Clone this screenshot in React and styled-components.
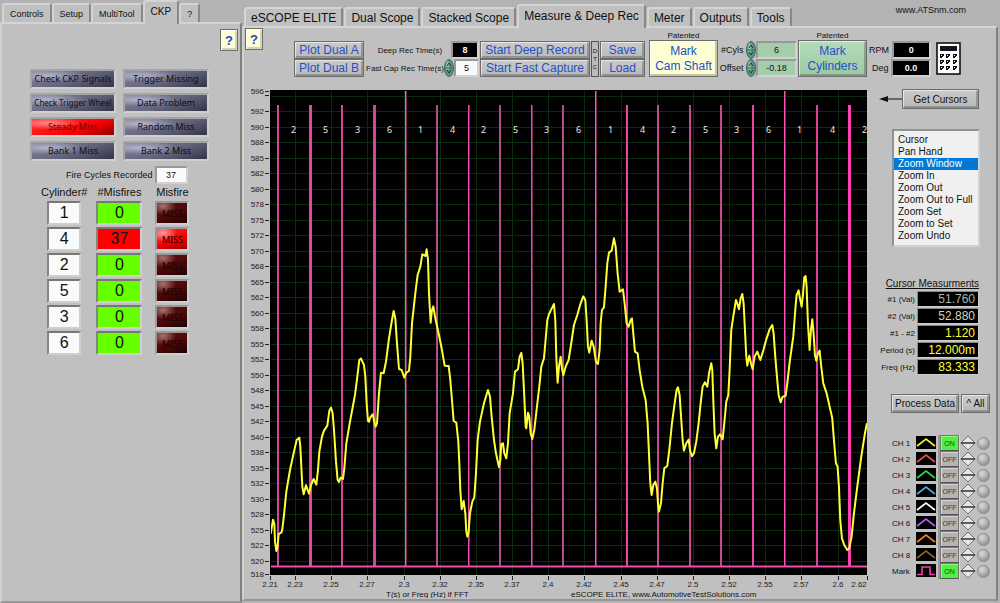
import React from 'react';
import styled, { createGlobalStyle } from 'styled-components';

const GlobalStyle = createGlobalStyle`
  * {
    box-sizing: border-box;
  }

  body {
    margin: 0;
    background: #b3b3b3;
    color: #111;
    font-family: "Liberation Sans", Arial, sans-serif;
    font-size: 10px;
  }

  button, input, select {
    margin: 0;
    padding: 0;
    border-radius: 0;
    color: inherit;
    font: inherit;
  }
`;

const Screen = styled.div`
  display: flex;
  align-items: stretch;
  min-height: 100vh;
`;

const Side = styled.section`
  display: flex;
  flex-direction: column;
  flex: 0 0 242px;
`;

const Main = styled.section`
  display: flex;
  flex-direction: column;
  flex: 1;
  min-width: 0;
  padding: 0 2px 2px 0;
`;

const Tab = styled.button`
  position: relative;
  z-index: ${props => (props.$active ? 1 : 0)};
  height: ${props => (props.$active ? 24 : 19)}px;
  margin-bottom: ${props => (props.$active ? -2 : 0)}px;
  padding: 0 6px ${props => (props.$active ? 3 : 0)}px;
  border: 2px solid;
  border-color: #d4d4d4 #888 #c0c0c0 #d4d4d4;
  border-bottom-width: 0;
  border-radius: 3px 3px 0 0;
  background: #c0c0c0;
  font-size: ${props => (props.$active ? 'max(10px, 1em)' : '1em')};
  white-space: nowrap;
`;

const TabBar = styled.nav`
  display: flex;
  align-items: flex-end;
  gap: ${props => (props.$large ? 1 : 0)}px;
  height: ${props => (props.$large ? 26 : 22)}px;
  padding-left: 2px;
  font-size: ${props => (props.$large ? 12 : 9)}px;

  ${Tab} {
    padding-left: ${props => (props.$large ? 5 : 6)}px;
    padding-right: ${props => (props.$large ? 5 : 6)}px;
  }
`;

const SiteName = styled.span`
  align-self: flex-start;
  margin: 5px 32px 0 auto;
  font-size: 9px;
`;

const Panel = styled.div`
  flex: 1;
  border: 2px solid;
  border-color: #d4d4d4 #808080 #969696 #d0d0d0;
  background: #c0c0c0;
`;

const HelpButton = styled.button`
  display: block;
  align-self: flex-start;
  width: 18px;
  height: 22px;
  border: 1px solid #6f6f66;
  background: #fdfdd6;
  box-shadow: inset 1px 1px #fffff2, inset -2px -2px #d5d5b4;
  color: #1c49c8;
  font-size: 13px;
  font-weight: bold;
`;

const SideBody = styled(Panel)`
  padding: 5px 2px 0 28px;

  ${HelpButton} {
    margin-left: auto;
  }
`;

const StatusGrid = styled.div`
  display: grid;
  grid-template-columns: 86px 86px;
  gap: 4px 7px;
  margin-top: 18px;
`;

const StatusLamp = styled.button`
  height: 20px;
  border: 2px solid;
  border-color: #a4a4a4 #d0d0d0 #d0d0d0 #a4a4a4;
  background: ${props => props.$lit
    ? 'radial-gradient(ellipse at 18% 25%, #ff8a8a, transparent 38%), linear-gradient(160deg, #ff2020 20%, #f40000 65%, #8e0000)'
    : 'radial-gradient(ellipse at 18% 30%, #b4b4ca, transparent 42%), linear-gradient(160deg, #82829b, #62627a 55%, #353548)'};
  color: ${props => (props.$lit ? '#6a0505' : '#0e0e18')};
  font-family: "Noto Sans", sans-serif;
  font-size: ${props => (props.$long ? 8 : 9)}px;
  line-height: 14px;
  white-space: nowrap;
`;

const CycleRow = styled.label`
  display: flex;
  align-items: center;
  gap: 2px;
  margin: 5px 0 0 36px;
  font-size: 9px;
`;

const Field = styled.input`
  width: ${props => props.$width}px;
  min-width: 0;
  height: ${props => props.$height || 18}px;
  border: 2px solid;
  border-color: #999 #d2d2d2 #d2d2d2 #999;
  background: ${props => props.$bg || '#fafafa'};
  color: ${props => props.$color || '#111'};
  font-size: ${props => props.$size || 9}px;
  font-weight: ${props => (props.$bold ? 'bold' : 'normal')};
  text-align: center;
`;

const MisfireTable = styled.table`
  margin-left: 6px;
  border-collapse: separate;
  border-spacing: 5px 2px;

  th {
    height: 13px;
    padding: 0;
    font-size: 11px;
    font-weight: normal;
    line-height: 13px;
    white-space: nowrap;
  }

  td {
    padding: 0 4px;
  }
`;

const CountCell = styled.div`
  width: ${props => props.$width}px;
  height: 24px;
  margin: 0 auto;
  border: 2px solid;
  border-color: #777 #cfcfcf #cfcfcf #858585;
  background: ${props => props.$bg};
  font-size: 16px;
  line-height: 20px;
  text-align: center;
`;

const MissLamp = styled(CountCell)`
  background: ${props => props.$lit
    ? 'radial-gradient(ellipse at 20% 20%, #ff9c9c, transparent 40%), linear-gradient(160deg, #ff2a2a, #f00000 60%, #a00000)'
    : 'radial-gradient(ellipse at 20% 15%, #a87070, transparent 38%), linear-gradient(160deg, #621010, #4a0808 55%, #220202)'};
  border-color: #999 #cfcfcf #cfcfcf #999;
  color: #180202;
  font-family: "Noto Sans", sans-serif;
  font-size: 9px;
  line-height: 21px;
`;

const Toolbar = styled.div`
  display: flex;
  align-items: flex-end;
  height: 49px;
  padding-left: 1px;
`;

const Stack = styled.div`
  display: flex;
  flex-direction: column;
  align-items: ${props => props.$align || 'stretch'};
  width: ${props => (props.$width ? `${props.$width}px` : 'auto')};
  margin-left: ${props => props.$left || 0}px;
`;

const ToolButton = styled.button`
  height: ${props => props.$height || 18}px;
  border: 1px solid #6c6c6c;
  background: ${props => props.$bg || 'linear-gradient(#cacaca, #b9b9b9)'};
  box-shadow: inset 1px 1px rgba(255, 255, 255, 0.55), inset -2px -2px rgba(0, 0, 0, 0.22);
  color: ${props => (props.$dark ? '#111' : '#2350c8')};
  font-size: ${props => (props.$dark ? 10 : 12)}px;
  line-height: 15px;
  white-space: nowrap;
`;

const DtcButton = styled.button`
  width: 8px;
  height: 36px;
  margin-left: 1px;
  border: 1px solid #555;
  background: #bcbcbc;
  font-size: 6px;
  line-height: 8px;
`;

const Patented = styled.span`
  height: 8px;
  font-size: 8px;
  line-height: 8px;
  text-align: center;
`;

const FieldRow = styled.div`
  display: flex;
  align-items: center;
  justify-content: flex-end;
  height: 18px;
  font-size: ${props => (props.$small ? 8 : 9)}px;
  white-space: nowrap;
`;

const PlainButton = styled.button`
  display: block;
  border: 0;
  background: none;
  line-height: 0;
`;

const CalcButton = styled(PlainButton)`
  margin: 0 0 2px 5px;
`;

const Body = styled.div`
  display: flex;
`;

const Plot = styled.svg`
  display: block;
  flex: 1;
  min-width: 0;
  height: auto;
`;

const Sidebar = styled.aside`
  display: flex;
  flex: 0 0 128px;
  flex-direction: column;
  padding: 12px 0 0 9px;
`;

const CursorRow = styled.div`
  display: flex;
  align-items: center;

  ${ToolButton} {
    width: 77px;
  }
`;

const ToolList = styled.select`
  width: 88px;
  height: 118px;
  margin: 20px 0 0 15px;
  padding: 3px 0;
  overflow: hidden;
  border: 2px solid;
  border-color: #929292 #d2d2d2 #d2d2d2 #929292;
  outline: 0;
  background: #f0f0f0;
  color: #111;
  font-size: 10px;
  scrollbar-width: none;

  option {
    min-height: 12px;
    padding: 0 4px;
    line-height: 12px;
  }

  option:checked {
    background: #0078d7 linear-gradient(#0078d7, #0078d7);
    color: #fff;
  }
`;

const Measurements = styled.div`
  display: grid;
  grid-template-columns: 38px 62px;
  gap: 1px 2px;
  align-items: center;
  justify-content: start;
  margin-top: 31px;
  font-size: 8px;
  text-align: right;
`;

const MeasureTitle = styled.div`
  grid-column: 1 / -1;
  height: 12px;
  font-size: 10px;
  line-height: 12px;
  text-decoration: underline;
  white-space: nowrap;
`;

const Readout = styled.output`
  height: 16px;
  padding-right: 3px;
  border: 1px solid;
  border-color: #888 #cfcfcf #cfcfcf #888;
  background: #000;
  color: ${props => props.$color};
  font-size: 12px;
  line-height: 15px;
`;

const ProcessRow = styled.div`
  display: flex;
  gap: 2px;
  margin: 19px 0 0 14px;
`;

const Channels = styled.div`
  display: grid;
  gap: 0;
  margin: 22px 0 0 15px;
`;

const Channel = styled.div`
  display: grid;
  grid-template-columns: 23px 21px 20px 17px 14px;
  column-gap: 1px;
  align-items: center;
  height: 16px;
  font-size: 8px;
  white-space: nowrap;
`;

const SwitchButton = styled.button`
  width: 19px;
  height: 16px;
  margin-left: 2px;
  border: 1px solid #777;
  border-bottom-color: #555;
  background: ${props => (props.$on ? '#4df043' : '#b4b4b4')};
  box-shadow: inset 1px 1px ${props => (props.$on ? '#8cff80' : '#d5d5d5')}, -2px 0 #999, 1px 0 #d6d6d6;
  color: ${props => (props.$on ? '#174a12' : '#333')};
  font-size: 7px;
`;

const Knob = styled.button`
  width: 13px;
  height: 13px;
  border: 1px solid #8c8c8c;
  border-radius: 50%;
  background: radial-gradient(circle at 35% 30%, #dcdcdc, #a2a2a2 60%, #858585);
`;

const statusLamps = [
  'Check CKP Signals', 'Trigger Missing',
  'Check Trigger Wheel', 'Data Problem',
  'Steady Miss', 'Random Miss',
  'Bank 1 Miss', 'Bank 2 Miss',
];

const cylinders = [
  { id: 1, misfires: 0 },
  { id: 4, misfires: 37 },
  { id: 2, misfires: 0 },
  { id: 5, misfires: 0 },
  { id: 3, misfires: 0 },
  { id: 6, misfires: 0 },
];

const cursorTools = [
  'Cursor', 'Pan Hand', 'Zoom Window', 'Zoom In', 'Zoom Out',
  'Zoom Out to Full', 'Zoom Set', 'Zoom to Set', 'Zoom Undo',
];

const measurements = [
  ['#1 (Val)', '51.760', '#a5b9a8'],
  ['#2 (Val)', '52.880', '#d6d3b4'],
  ['#1 - #2', '1.120', '#ffff38'],
  ['Period (s)', '12.000m', '#ffff38'],
  ['Freq (Hz)', '83.333', '#ffff38'],
];

const channels = [
  ['CH 1', '#f5ee33', true],
  ['CH 2', '#e25050', false],
  ['CH 3', '#25e035', false],
  ['CH 4', '#49aee8', false],
  ['CH 5', '#ffffff', false],
  ['CH 6', '#b15cf0', false],
  ['CH 7', '#f08020', false],
  ['CH 8', '#8a6420', false],
  ['Mark', '#e846a8', true],
];

const yLabels = [
  592, 590, 588, 585, 582, 580, 578, 575, 572, 570, 568, 565, 562, 560, 558,
  555, 552, 550, 548, 545, 542, 540, 538, 535, 532, 530, 528, 525, 522, 520,
];

const xTicks = [
  [270, '2.21'], [295, '2.23'], [331, '2.25'], [367, '2.27'], [404, '2.3'],
  [440, '2.32'], [476, '2.35'], [512, '2.37'], [548, '2.4'], [584, '2.42'],
  [621, '2.45'], [657, '2.47'], [693, '2.5'], [729, '2.52'], [765, '2.55'],
  [801, '2.57'], [838, '2.6'], [867, '2.62'],
];

// x, line width, colour, full height
const markers = [
  [278, 2, '#d8429a'], [310, 3, '#e846a4'], [342, 2, '#d8429a'], [374, 3, '#d8429a'],
  [405, 1, '#ff55bb', true], [437, 2, '#b05088'], [468, 1, '#f04cae'], [500, 2, '#b05088'],
  [531, 1, '#f04cae'], [563, 2, '#b05088'], [595, 1, '#ff55bb', true], [627, 2, '#e846a4'],
  [658, 2, '#c84894'], [690, 2, '#c84894'], [721, 2, '#c84894'], [753, 2, '#e846a4'],
  [784, 1, '#ff55bb', true], [817, 2, '#d8429a'], [849, 3, '#ff3fb4'],
];

const firing = [2, 5, 3, 6, 1, 4];

// samples at three per pixel, origin at the left of the screen
const trace = `
92,942 99,899 103,912 105,965 109,993 112,985 116,942 124,938 127,928 132,885 139,815 150,750
162,695 170,660 178,653 181,680 184,740 187,800 191,823 198,796 207,821 213,795 221,777 229,794
234,750 238,695 246,650 252,632 262,617 268,572 273,563 278,580 282,630 288,725 293,780 297,786
302,773 309,777 313,745 319,670 330,605 345,525 352,470 358,420 363,416 372,435 376,470 380,550
384,603 387,605 391,592 398,583 404,610 407,620 411,610 417,520 423,458 431,460 438,425 447,355
456,300 461,273 466,295 471,370 477,447 485,450 493,473 499,458 507,453 511,410 516,310 526,220
533,165 541,140 547,103 556,108 560,88 564,120 567,220 572,308 576,270 580,259 586,295 597,345
605,385 614,437 626,438 631,480 636,540 641,603 649,608 655,665 658,730 661,810 665,868 671,843
676,880 679,935 682,950 686,935 690,880 697,845 703,832 708,760 713,660 720,605 732,550 744,510
750,530 755,590 762,660 768,700 777,741 781,720 784,672 789,670 793,700 799,715 804,670 809,580
819,520 825,455 834,448 839,410 844,399 848,430 853,530 857,620 859,625 864,578 868,590 872,640
877,657 883,630 891,560 898,500 904,440 912,415 916,370 922,300 928,280 937,262 942,252 946,300
949,410 953,488 957,440 962,410 966,445 970,466 977,440 986,420 993,375 1002,315 1012,285
1022,250 1030,229 1036,240 1040,300 1044,380 1048,398 1055,362 1061,380 1068,425 1074,432
1079,390 1082,310 1086,270 1092,262 1097,200 1102,130 1107,98 1115,92 1122,55 1127,80 1133,160
1139,215 1149,208 1154,250 1160,310 1166,320 1172,300 1176,295 1180,340 1185,395 1193,400
1199,450 1207,500 1217,540 1223,610 1227,700 1231,790 1235,825 1240,795 1246,785 1251,805
1254,850 1257,875 1263,850 1268,790 1273,745 1282,738 1288,690 1296,610 1304,550 1310,510
1314,502 1319,525 1324,600 1328,660 1332,692 1339,670 1346,659 1350,690 1356,709 1362,700
1369,665 1376,610 1382,550 1388,500 1395,487 1402,500 1408,455 1414,430 1417,450 1420,540
1424,640 1429,685 1434,650 1440,643 1448,658 1454,600 1459,545 1465,525 1469,450 1474,330
1480,290 1488,240 1492,250 1497,268 1502,235 1507,222 1511,250 1515,330 1519,410 1522,437
1528,407 1533,430 1538,448 1544,410 1552,395 1561,420 1569,395 1580,355 1589,328 1597,315
1601,340 1606,410 1611,470 1616,525 1622,547 1628,530 1637,528 1642,490 1650,420 1660,350
1666,270 1670,225 1676,211 1680,235 1685,260 1689,225 1693,172 1697,168 1700,200 1704,310
1709,390 1713,330 1717,298 1721,340 1725,405 1729,422 1734,400 1739,392 1744,440 1750,490
1760,520 1768,555 1777,595 1782,660 1788,730 1793,740 1797,800 1801,900 1806,955 1813,975
1822,990 1828,985 1835,950 1842,880 1852,800 1864,710 1875,640 1881,610`;

const Spinner = ({ label }) => (
  <PlainButton aria-label={label}>
    <svg width="10" height="18" viewBox="0 0 10 18">
      <ellipse cx="5" cy="9" rx="4.5" ry="8.5" fill="#5d9384" stroke="#3c6d60" />
      <ellipse cx="3.5" cy="7" rx="1.6" ry="5" fill="#8dbcac" />
      <path d="M3 7 L5 4 L7 7 M3 11 L5 14 L7 11" fill="none" stroke="#193d33" />
      <path d="M1 9 H9" stroke="#3c6d60" />
    </svg>
  </PlainButton>
);

const Calculator = () => (
  <svg width="25" height="33" viewBox="0 0 25 33">
    <rect x="1" y="1" width="23" height="31" fill="#fff" stroke="#111" strokeWidth="1.6" />
    <rect x="4" y="4" width="17" height="5" fill="#15151f" />
    {[12, 18, 24].map(y => [4, 10, 17].map(x => (
      <path key={`${x}-${y}`} d={`M${x} ${y} h4 v2 h-1 v1 h-1 v1 h-2 z`} fill="#111" />
    )))}
    {[13, 19, 25].map(y => [5, 11, 18].map(x => (
      <rect key={`${x}-${y}`} x={x} y={y} width="1" height="1" fill="#fff" />
    )))}
  </svg>
);

const ScopePlot = () => (
  <Plot viewBox="244 77 624 521" role="img" aria-label="CKP trace">
    <defs>
      <clipPath id="screen">
        <rect x="271" y="91" width="596" height="484" />
      </clipPath>
    </defs>
    <rect x="270" y="90" width="597" height="485" fill="#000" />
    <g clipPath="url(#screen)">
      <g stroke="#0b2b0f">
        {xTicks.slice(1, -1).map(([x]) => <path key={x} d={`M${x + 0.5} 90 V575`} />)}
        {[95.5, ...yLabels.map((label, i) => 111 + i * 15.5)].map(y => (
          <path key={y} d={`M270 ${Math.round(y) + 0.5} H867`} />
        ))}
      </g>
      {markers.map(([x, width, color, full]) => (
        <rect key={x} x={x - Math.floor(width / 2)} y={full ? 91 : 105} width={width} height={full ? 476 : 462} fill={color} />
      ))}
      {markers.filter(m => m[1] === 1).map(([x, width, color, full]) => (
        <rect key={x} x={x + 1} y={full ? 91 : 105} width="1" height={full ? 476 : 462} fill="#80285e" />
      ))}
      <path d="M270 566.5 H867" stroke="#f04cae" strokeWidth="2" />
      <polyline
        points={trace}
        transform="translate(240 220) scale(0.3333)"
        fill="none"
        stroke="#ffff35"
        strokeWidth="6"
        strokeLinejoin="round"
      />
      <g fill="#e8e8e8" fontFamily="Noto Sans, sans-serif" fontSize="9" textAnchor="middle">
        {markers.map(([x], i) => (
          <text key={x} x={x + 15.5} y="133">{firing[i % 6]}</text>
        ))}
      </g>
    </g>
    <g stroke="#222">
      {[91.5, 95.5, ...yLabels.map((label, i) => Math.round(111 + i * 15.5) + 0.5), 574.5].map(y => (
        <path key={y} d={`M265 ${y} H269`} />
      ))}
      {xTicks.map(([x]) => <path key={x} d={`M${x + 0.5} 576 V580`} />)}
    </g>
    <g fontSize="8" fill="#222" textAnchor="end">
      <text x="264" y="94">596</text>
      {yLabels.map((label, i) => (
        <text key={label} x="264" y={Math.round(114 + i * 15.5)}>{label}</text>
      ))}
      <text x="264" y="577">518</text>
    </g>
    <g fontSize="8" fill="#222" textAnchor="middle">
      {xTicks.map(([x, label]) => <text key={x} x={Math.min(x, 859)} y="587">{label}</text>)}
    </g>
    <g fontSize="8" fill="#111">
      <text x="386" y="597">T(s) or Freq (Hz) if FFT</text>
      <text x="571" y="597">eSCOPE ELITE, www.AutomotiveTestSolutions.com</text>
    </g>
  </Plot>
);

const SidePanel = () => (
  <Side>
    <TabBar>
      <Tab>Controls</Tab>
      <Tab>Setup</Tab>
      <Tab>MultiTool</Tab>
      <Tab $active>CKP</Tab>
      <Tab>?</Tab>
    </TabBar>
    <SideBody>
      <HelpButton>?</HelpButton>
      <StatusGrid>
        {statusLamps.map(name => (
          <StatusLamp key={name} $lit={name === 'Steady Miss'} $long={name.length > 18}>{name}</StatusLamp>
        ))}
      </StatusGrid>
      <CycleRow>
        Fire Cycles Recorded
        <Field $width={33} defaultValue="37" />
      </CycleRow>
      <MisfireTable>
        <thead>
          <tr>
            <th>Cylinder#</th>
            <th>#Misfires</th>
            <th>Misfire</th>
          </tr>
        </thead>
        <tbody>
          {cylinders.map(({ id, misfires }) => (
            <tr key={id}>
              <td><CountCell $width={34} $bg="#fafafa">{id}</CountCell></td>
              <td><CountCell $width={46} $bg={misfires ? '#ff0000' : '#66ff00'}>{misfires}</CountCell></td>
              <td><MissLamp $width={34} $lit={misfires > 0}>MISS</MissLamp></td>
            </tr>
          ))}
        </tbody>
      </MisfireTable>
    </SideBody>
  </Side>
);

const ScopeToolbar = () => (
  <Toolbar>
    <HelpButton>?</HelpButton>
    <Stack $left={31} $width={70}>
      <ToolButton>Plot Dual A</ToolButton>
      <ToolButton>Plot Dual B</ToolButton>
    </Stack>
    <Stack $left={2} $width={113}>
      <FieldRow $small>
        <label htmlFor="deep-time">Deep Rec Time(s)&nbsp;&nbsp;&nbsp;&nbsp;</label>
        <Field id="deep-time" $width={28} $bg="#000" $color="#fff" $bold defaultValue="8" />
      </FieldRow>
      <FieldRow $small>
        <label htmlFor="fast-time">Fast Cap Rec Time(s)</label>
        <Spinner label="Fast capture time" />
        <Field id="fast-time" $width={26} defaultValue="5" />
      </FieldRow>
    </Stack>
    <Stack $left={1} $width={110}>
      <ToolButton>Start Deep Record</ToolButton>
      <ToolButton>Start Fast Capture</ToolButton>
    </Stack>
    <DtcButton>D<br />T<br />C</DtcButton>
    <Stack $left={1} $width={45}>
      <ToolButton>Save</ToolButton>
      <ToolButton>Load</ToolButton>
    </Stack>
    <Stack $left={4} $width={69}>
      <Patented>Patented</Patented>
      <ToolButton $height={37} $bg="#fefed4">Mark<br />Cam Shaft</ToolButton>
    </Stack>
    <Stack $left={1} $width={78}>
      <FieldRow>
        <label htmlFor="cyls">#Cyls&nbsp;</label>
        <Spinner label="Cylinders" />
        <Field id="cyls" $width={41} $bg="#a6cdab" defaultValue="6" />
      </FieldRow>
      <FieldRow>
        <label htmlFor="offset">Offset&nbsp;</label>
        <Spinner label="Offset step" />
        <Field id="offset" $width={41} $bg="#a6cdab" defaultValue="-0.18" />
      </FieldRow>
    </Stack>
    <Stack $left={1} $width={69}>
      <Patented>Patented</Patented>
      <ToolButton $height={37} $bg="linear-gradient(#b4dcb8, #9cc8a2)">Mark<br />Cylinders</ToolButton>
    </Stack>
    <Stack $left={2} $width={62}>
      <FieldRow>
        <label htmlFor="rpm">RPM&nbsp;</label>
        <Field id="rpm" $width={40} $bg="#000" $color="#fff" $bold defaultValue="0" />
      </FieldRow>
      <FieldRow>
        <label htmlFor="deg">Deg&nbsp;</label>
        <Field id="deg" $width={40} $bg="#000" $color="#fff" $bold defaultValue="0.0" />
      </FieldRow>
    </Stack>
    <CalcButton aria-label="Calculator"><Calculator /></CalcButton>
  </Toolbar>
);

const ChannelRow = ({ name, color, on }) => (
  <Channel>
    <span>{name}</span>
    <svg width="20" height="14" viewBox="0 0 20 14">
      <rect width="20" height="13" fill="#000" />
      <path
        d={name === 'Mark' ? 'M1 10.5 H6 V3 H14 V10.5 H19' : 'M1 10 L3 8.5 L10 3 L17 8.5 L19 10'}
        fill="none"
        stroke={color}
        strokeWidth="1.6"
      />
    </svg>
    <SwitchButton $on={on}>{on ? 'ON' : 'OFF'}</SwitchButton>
    <PlainButton aria-label={`${name} position`}>
      <svg width="16" height="16" viewBox="0 0 16 16">
        <path d="M8 1 L15 8 L8 15 L1 8 Z" fill="#e6e6e6" stroke="#707070" />
        <path d="M1 8 H15" stroke="#222" strokeWidth="1.4" />
      </svg>
    </PlainButton>
    <Knob aria-label={`${name} reset`} />
  </Channel>
);

const ScopeSidebar = () => (
  <Sidebar>
    <CursorRow>
      <svg width="25" height="12" viewBox="0 0 25 12">
        <path d="M8 6 H25" stroke="#111" />
        <path d="M2 6 L11 3 V9 Z" fill="#111" />
      </svg>
      <ToolButton $dark $height={20}>Get Cursors</ToolButton>
    </CursorRow>
    <ToolList size={9} defaultValue="Zoom Window" aria-label="Cursor tool">
      {cursorTools.map(tool => <option key={tool}>{tool}</option>)}
    </ToolList>
    <Measurements>
      <MeasureTitle>Cursor Measurments</MeasureTitle>
      {measurements.map(([name, value, color]) => (
        <React.Fragment key={name}>
          <span>{name}</span>
          <Readout $color={color}>{value}</Readout>
        </React.Fragment>
      ))}
    </Measurements>
    <ProcessRow>
      <Stack $width={68}><ToolButton $dark $height={19}>Process Data</ToolButton></Stack>
      <Stack $width={29}><ToolButton $dark $height={19}>^ All</ToolButton></Stack>
    </ProcessRow>
    <Channels>
      {channels.map(([name, color, on]) => (
        <ChannelRow key={name} name={name} color={color} on={on} />
      ))}
    </Channels>
  </Sidebar>
);

const App = () => {
  return (
    <Screen>
      <GlobalStyle />
      <SidePanel />
      <Main>
        <TabBar $large>
          <Tab>eSCOPE ELITE</Tab>
          <Tab>Dual Scope</Tab>
          <Tab>Stacked Scope</Tab>
          <Tab $active>Measure &amp; Deep Rec</Tab>
          <Tab>Meter</Tab>
          <Tab>Outputs</Tab>
          <Tab>Tools</Tab>
          <SiteName>www.ATSnm.com</SiteName>
        </TabBar>
        <Panel>
          <ScopeToolbar />
          <Body>
            <ScopePlot />
            <ScopeSidebar />
          </Body>
        </Panel>
      </Main>
    </Screen>
  )
}

export default App
